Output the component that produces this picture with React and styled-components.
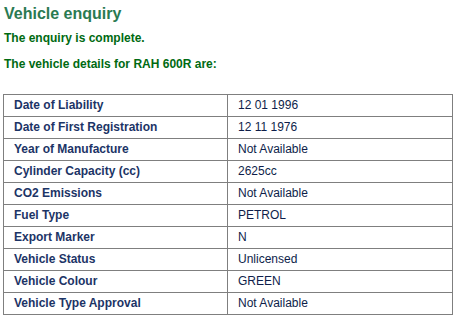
import React from "react";
import styled, { createGlobalStyle } from "styled-components";

const GlobalStyle = createGlobalStyle`
  body {
    margin: 0;
    background: #ffffff;
    font-family: "Liberation Sans", Arial, sans-serif;
  }
`;

const Page = styled.div`
  padding: 3px 4px 0 3px;
`;

const Title = styled.h1`
  margin: 0 0 0 1px;
  font-size: 16px;
  line-height: 22px;
  font-weight: 700;
  color: #2a7a52;
`;

const Note = styled.p`
  margin: ${(p) => p.$top || 0}px 0 0 1px;
  font-size: 12px;
  line-height: 16px;
  font-weight: 700;
  color: #006a12;
`;

const Table = styled.table`
  margin-top: 22px;
  width: 450px;
  table-layout: fixed;
  border-collapse: collapse;
  border: 1px solid #7f7f7f;
  font-size: 12px;
`;

const Row = styled.tr`
  height: 22px;
`;

const Cell = styled.td`
  width: ${(p) => (p.$label ? "213px" : "auto")};
  padding: 0 0 1px 10px;
  border: 1px solid #7f7f7f;
  color: ${(p) => (p.$label ? "#1c3466" : "#0e1e4a")};
  font-weight: ${(p) => (p.$label ? 700 : 400)};
  line-height: 14px;
`;

const details = [
  ["Date of Liability", "12 01 1996"],
  ["Date of First Registration", "12 11 1976"],
  ["Year of Manufacture", "Not Available"],
  ["Cylinder Capacity (cc)", "2625cc"],
  ["CO2 Emissions", "Not Available"],
  ["Fuel Type", "PETROL"],
  ["Export Marker", "N"],
  ["Vehicle Status", "Unlicensed"],
  ["Vehicle Colour", "GREEN"],
  ["Vehicle Type Approval", "Not Available"],
];

export default function App() {
  return (
    <Page>
      <GlobalStyle />
      <Title>Vehicle enquiry</Title>
      <Note $top={5}>The enquiry is complete.</Note>
      <Note $top={10}>The vehicle details for RAH 600R are:</Note>
      <Table>
        <tbody>
          {details.map(([label, value]) => (
            <Row key={label}>
              <Cell $label>{label}</Cell>
              <Cell>{value}</Cell>
            </Row>
          ))}
        </tbody>
      </Table>
    </Page>
  );
}
